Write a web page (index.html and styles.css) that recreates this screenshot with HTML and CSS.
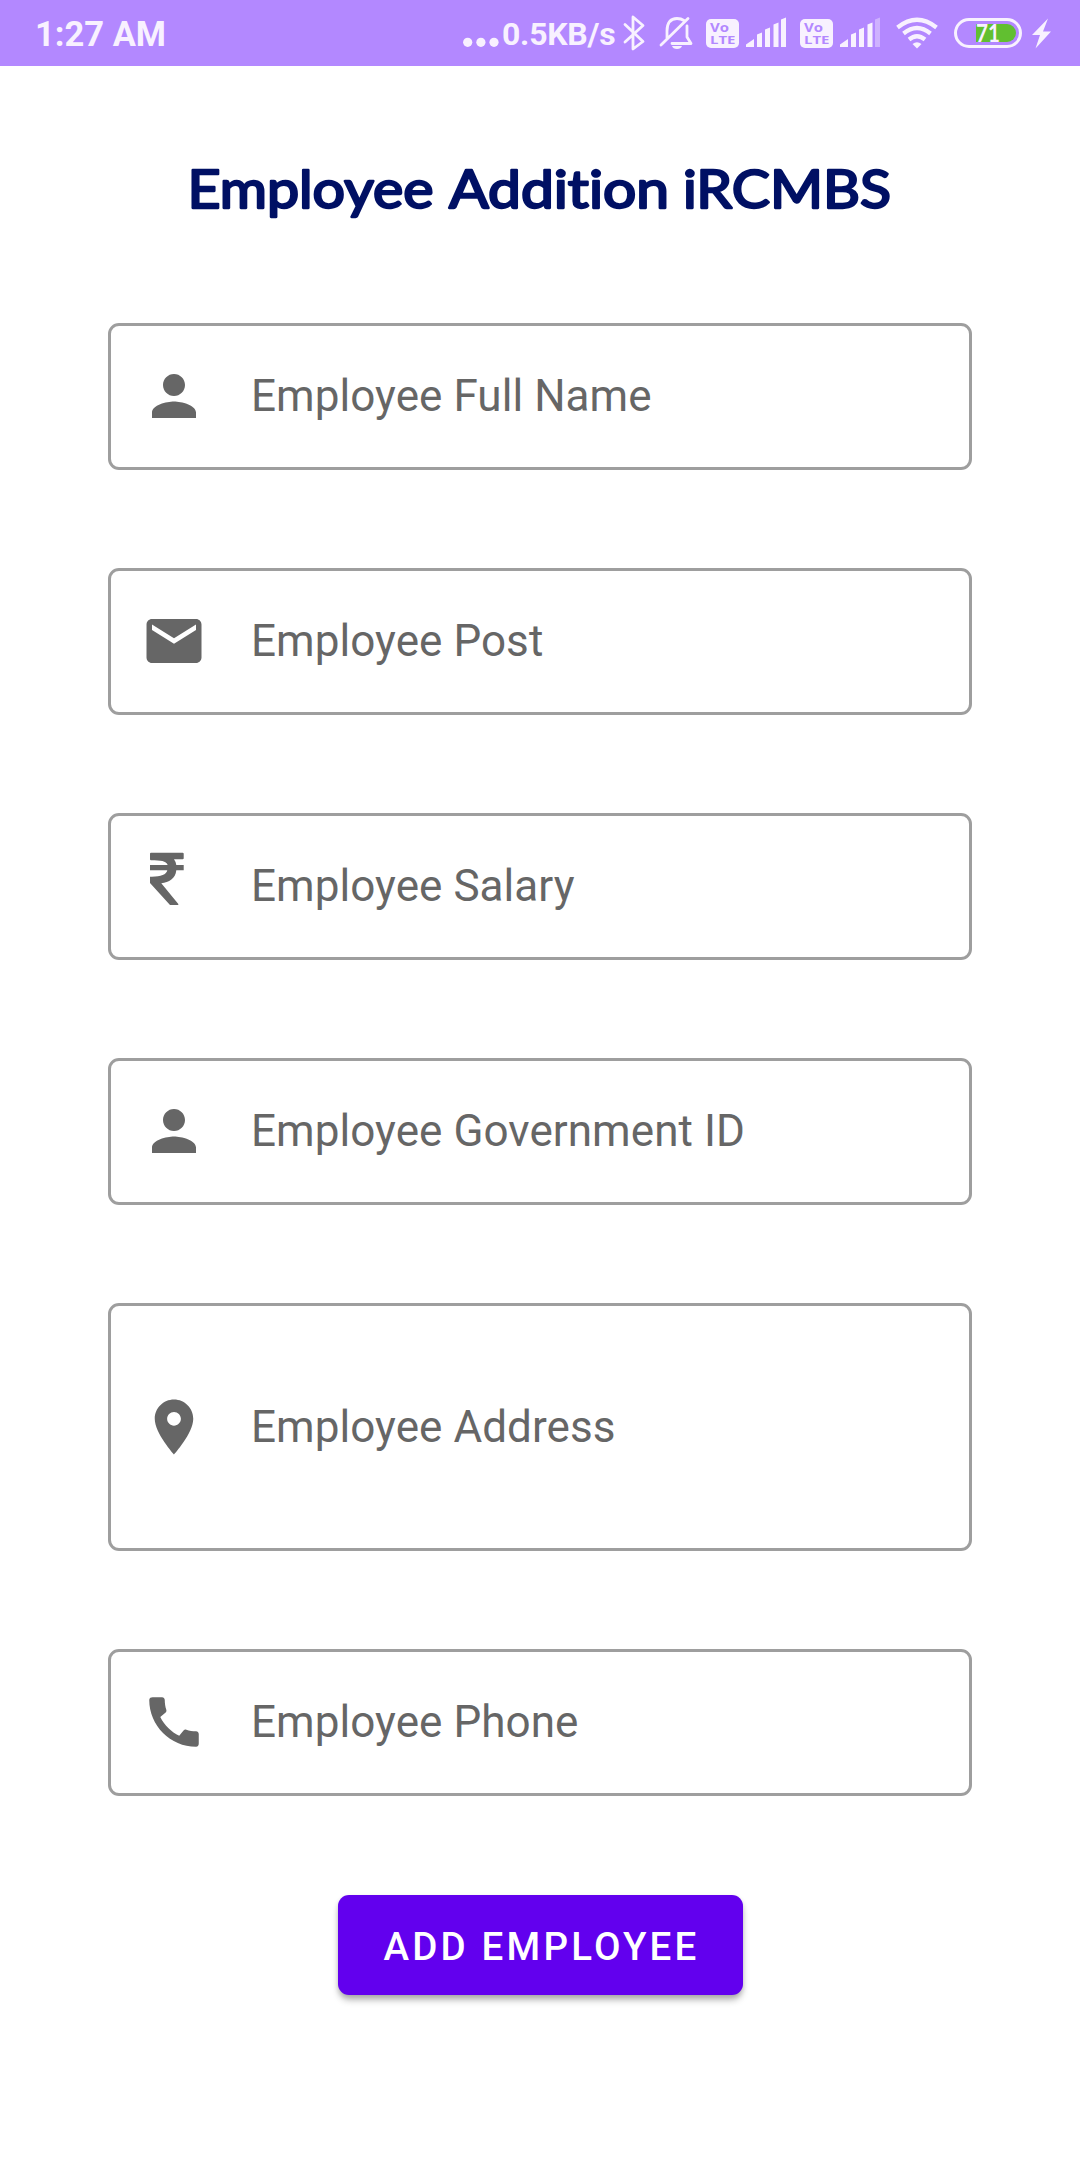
FILE: index.html
```html
<!DOCTYPE html>
<html lang="en">
<head>
<meta charset="utf-8">
<title>Employee Addition</title>
<link rel="stylesheet" href="styles.css">
</head>
<body>
<header class="status">
  <span class="clock">1:27 AM</span>
  <div class="tray">
    <svg class="dots" width="36" height="66" viewBox="0 0 36 66"><circle cx="4.7" cy="42.3" r="4.6"/><circle cx="17.9" cy="42.3" r="4.6"/><circle cx="31" cy="42.3" r="4.6"/></svg>
    <span class="speed">0.5KB/s</span>
    <svg class="sys" width="458" height="66" viewBox="622 0 458 66">
      <path class="line" d="M625 24.500L643 41.500L633 49V17L643 25.500L625 42"/>
      <path class="line" d="M667 39V31Q667 18.500 677 18.500Q681 18.500 684 20.500M687 26V37L691 43.500H672M661 45L688 18.500"/>
      <path d="M672 46h10q-1 3-5 3t-5-3z"/>
      <g id="lte">
        <rect x="706" y="19" width="33" height="29" rx="5"/>
        <text class="net" x="710" y="31.500" textLength="19" lengthAdjust="spacingAndGlyphs">Vo</text>
        <text class="net small" x="710" y="44" textLength="25.500" lengthAdjust="spacingAndGlyphs">LTE</text>
      </g>
      <path d="M746 47v-2.500l8-5.500v8zM757 47V34.500l5-2V47zM765 47V29.500l5-2V47zM773.500 47V24.500l5-2V47zM781 47V19.500l5-2V47z"/>
      <use href="#lte" x="94"/>
      <path d="M840 47v-2.500l8-5.500v8zM851 47V34.500l5-2V47zM859 47V29.500l5-2V47zM867.500 47V24.500l5-2V47z"/>
      <path class="dim" d="M875 47V19.500l5-2V47z"/>
      <path class="wave" d="M897.500 27.500Q917 12 936.500 27.500M903.500 33.500Q917 22.500 930.500 33.500M909 39.500Q917 33 925 39.500"/>
      <path d="M912.500 44q4.500-3.500 9 0l-4.500 4.500z"/>
      <rect class="case" x="955.500" y="19.500" width="65" height="27" rx="13.500"/>
      <path class="charge" d="M976 24h31a9 9 0 0 1 0 18h-31z"/>
      <text class="level" x="976" y="42" textLength="24" lengthAdjust="spacingAndGlyphs">71</text>
      <path d="M1048 18.500L1032 35h8l-4.500 13.500L1051 31.500h-8z"/>
    </svg>
  </div>
</header>
<main class="form">
  <h1 class="title"><svg width="720" height="80" viewBox="180 150 720 80"><text class="heading" x="187.500" y="208" textLength="246" lengthAdjust="spacingAndGlyphs">Employee</text><text class="heading" x="449" y="208" textLength="220" lengthAdjust="spacingAndGlyphs">Addition</text><text class="heading" x="683" y="208" textLength="208" lengthAdjust="spacingAndGlyphs">iRCMBS</text></svg></h1>
  <div class="field"><svg class="icon" viewBox="0 0 24 24"><path d="M12 12c2.210 0 4-1.790 4-4s-1.790-4-4-4-4 1.790-4 4 1.790 4 4 4zm0 2c-2.670 0-8 1.340-8 4v2h16v-2c0-2.660-5.330-4-8-4z"/></svg><span>Employee Full Name</span></div>
  <div class="field"><svg class="icon" viewBox="0 0 24 24"><path d="M20 4H4c-1.100 0-1.990.9-1.990 2L2 18c0 1.100.9 2 2 2h16c1.100 0 2-.9 2-2V6c0-1.100-.9-2-2-2zm0 4l-8 5-8-5V6l8 5 8-5v2z"/></svg><span>Employee Post</span></div>
  <div class="field"><svg class="icon" viewBox="0 0 66 66"><path d="M10-.3H41.700Q42.700-.3 42.700.7V5.300Q42.700 6.300 41.700 6.300H33Q35 9 35.300 12H42.700V17.300H35.300C34.500 25.500 28 29.500 20.300 30.300L37.300 51V52H29L9 30V23.700C19 24 25.500 22 26.300 17.300H9V12H26.700C25 8 20 7.300 10 7.300Q9 7.300 9 6.300V.7Q9-.3 10-.3z"/></svg><span>Employee Salary</span></div>
  <div class="field"><svg class="icon" viewBox="0 0 24 24"><path d="M12 12c2.210 0 4-1.790 4-4s-1.790-4-4-4-4 1.790-4 4 1.790 4 4 4zm0 2c-2.670 0-8 1.340-8 4v2h16v-2c0-2.660-5.330-4-8-4z"/></svg><span>Employee Government ID</span></div>
  <div class="field tall"><svg class="icon" viewBox="0 0 24 24"><path d="M12 2C8.130 2 5 5.130 5 9c0 5.250 7 13 7 13s7-7.750 7-13c0-3.870-3.130-7-7-7zm0 9.500c-1.380 0-2.500-1.120-2.500-2.500s1.120-2.500 2.500-2.500 2.500 1.120 2.500 2.500-1.120 2.500-2.500 2.500z"/></svg><span>Employee Address</span></div>
  <div class="field"><svg class="icon" viewBox="0 0 24 24"><path d="M20.010 15.380c-1.230 0-2.420-.2-3.530-.56-.35-.12-.74-.03-1.010.24l-1.570 1.970c-2.830-1.350-5.480-3.900-6.890-6.830l1.950-1.660c.27-.28.35-.67.24-1.020-.37-1.110-.56-2.300-.56-3.530 0-.54-.45-.99-.99-.99H4.190C3.650 3 3 3.240 3 3.990 3 13.280 10.730 21 20.010 21c.71 0 .99-.63.99-1.180v-3.450c0-.54-.45-.99-.99-.99z"/></svg><span>Employee Phone</span></div>
  <button class="submit" type="button">ADD EMPLOYEE</button>
</main>
</body>
</html>
```
FILE: styles.css
```css
* { box-sizing: border-box; }
body { margin: 0; min-height: 2160px; background: #fff; font-family: Roboto, "Liberation Sans", sans-serif; }
svg { display: block; fill: currentColor; overflow: visible; flex: none; }
.status { height: 66px; padding-left: 35px; display: flex; justify-content: space-between; align-items: center; background: #b388ff; color: #f8f1ff; }
.clock { padding-top: 2px; font-size: 34.500px; line-height: 64px; font-weight: 700; }
.tray { display: flex; align-items: center; }
.speed { width: 120px; margin-left: 3px; padding-top: 2px; font-size: 32px; line-height: 64px; font-weight: 700; letter-spacing: -.25px; }
.line { fill: none; stroke: currentColor; stroke-width: 2.8; stroke-linecap: round; stroke-linejoin: round; }
.net { font: 700 12.500px "Open Sans", sans-serif; fill: #b388ff; }
.small { font-size: 10.500px; }
.dim { opacity: .4; }
.wave { fill: none; stroke: currentColor; stroke-width: 4.2; }
.case { fill: none; stroke: currentColor; stroke-width: 3; }
.charge { fill: #61bf30; }
.level { font: 700 25px Lato, sans-serif; }
.form { padding: 0 108px 165px; display: flex; flex-direction: column; align-items: center; gap: 98px; }
.title { height: 80px; margin: 84px 0 -5px; font-size: 55px; color: #001064; }
.heading { font: 400 51.500px Lato, sans-serif; font-variant-ligatures: none; stroke: currentColor; stroke-width: 2.3; stroke-linejoin: round; stroke-linecap: round; }
.field { width: 864px; height: 147px; padding: 0 0 1px 30px; display: flex; align-items: center; gap: 44px; border: 3px solid #9e9e9e; border-radius: 11px; color: #666; font-size: 44px; letter-spacing: .06px; }
.tall { height: 248px; padding-bottom: 0; }
.icon { width: 66px; height: 66px; }
.submit { width: 405px; height: 100px; margin-top: 1px; padding: 3px 0 0 3px; border: 0; border-radius: 11px; background: #6200ee; color: #fff; font: 500 38.500px Roboto, sans-serif; letter-spacing: 3.200px; box-shadow: 0 6px 7px -1px rgba(0,0,0,.28), 0 2px 5px rgba(0,0,0,.12); }
```
